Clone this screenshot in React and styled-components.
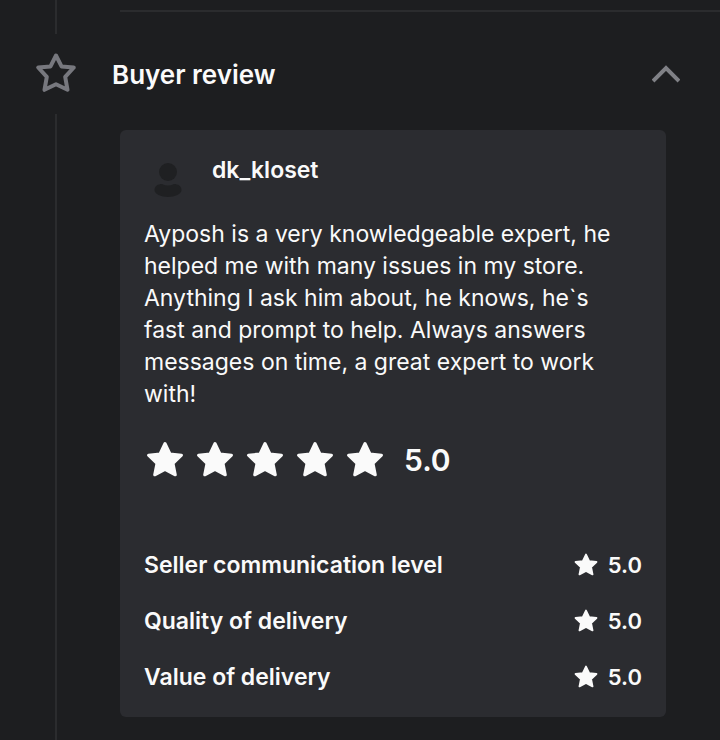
import React, { useState } from 'react';
import styled, { createGlobalStyle } from 'styled-components';

const review = {
  buyer: 'dk_kloset',
  text: 'Ayposh is a very knowledgeable expert, he helped me with many issues in my store. Anything I ask him about, he knows, he`s fast and prompt to help. Always answers messages on time, a great expert to work with!',
  score: '5.0',
};

const ratings = [
  { id: 0, name: 'Seller communication level', score: '5.0' },
  { id: 1, name: 'Quality of delivery', score: '5.0' },
  { id: 2, name: 'Value of delivery', score: '5.0' },
];

const starPath =
  'M19 2.500 24 13 35.500 14.200 27 22.300 29.300 33.800 19 28.400 8.700 33.800 11 22.300 2.500 14.200 14 13Z';

function Star({ size }) {
  return (
    <StarIcon $size={size} viewBox='0 0 38 38' aria-hidden='true'>
      <path d={starPath} />
    </StarIcon>
  );
}

function App() {
  const [open, setOpen] = useState(true);

  return (
    <Page>
      <GlobalStyle />
      <Step>
        <Rail>
          <Line />
        </Rail>
        <Divider />
      </Step>
      <Step $grow>
        <Rail>
          <RailIcon viewBox='0 0 42 42' aria-hidden='true'>
            <path d='M21 3.500 26.500 14.400 38.800 15.500 30.200 24.800 32.500 37.800 21 32.300 9.500 37.800 11.800 24.800 3.200 15.500 15.500 14.400Z' />
          </RailIcon>
          <Line />
        </Rail>
        <div>
          <Header aria-expanded={open} onClick={() => setOpen(!open)}>
            Buyer review
            <Chevron $open={open} viewBox='0 0 28 18' aria-hidden='true'>
              <path d='M1 16 14 3 27 16' />
            </Chevron>
          </Header>
          {open && (
            <Card>
              <Buyer>
                <Avatar viewBox='0 0 48 48' aria-hidden='true'>
                  <circle cx='24' cy='18' r='9' />
                  <path d='M10.500 36C10.500 32 14 30 18 30C22 32 26 32 30 30C34 30 37.500 32 37.500 36C37.500 40 31 43 24 43C17 43 10.500 40 10.500 36Z' />
                </Avatar>
                <BuyerName>{review.buyer}</BuyerName>
              </Buyer>
              <ReviewText>{review.text}</ReviewText>
              <Overall>
                <Stars>
                  {[1, 2, 3, 4, 5].map((n) => (
                    <Star key={n} size={38} />
                  ))}
                </Stars>
                <OverallScore>{review.score}</OverallScore>
              </Overall>
              <RatingList>
                {ratings.map((rating) => (
                  <RatingRow key={rating.id}>
                    <span>{rating.name}</span>
                    <RatingScore>
                      <Star size={24} />
                      {rating.score}
                    </RatingScore>
                  </RatingRow>
                ))}
              </RatingList>
            </Card>
          )}
        </div>
      </Step>
    </Page>
  );
}

const GlobalStyle = createGlobalStyle`
  * {
    box-sizing: border-box;
  }
  body {
    margin: 0;
    background: #1d1e20;
    color: #fafafa;
    font-family: Inter, 'Liberation Sans', sans-serif;
  }
`;
const Page = styled.main`
  display: flex;
  flex-direction: column;
  min-height: 100vh;
`;
const Step = styled.section`
  display: grid;
  grid-template-columns: 112px 1fr;
  flex-grow: ${(props) => (props.$grow ? 1 : 0)};
`;
const Rail = styled.div`
  display: flex;
  flex-direction: column;
  align-items: center;
`;
const Line = styled.div`
  flex: 1;
  width: 2px;
  min-height: 34px;
  background: #2b2c2e;
`;
const RailIcon = styled.svg`
  width: 42px;
  height: 42px;
  margin: 18px 0 20px;
  fill: none;
  stroke: #77787e;
  stroke-width: 4;
  stroke-linejoin: round;
`;
const Divider = styled.hr`
  width: auto;
  height: 2px;
  margin: 10px 0 0 8px;
  border: 0;
  background: #2b2c2e;
`;
const Header = styled.button`
  display: flex;
  align-items: center;
  justify-content: space-between;
  width: 100%;
  height: 80px;
  padding: 0 40px 0 0;
  border: 0;
  background: none;
  color: inherit;
  font-family: inherit;
  font-size: 26px;
  font-weight: 600;
  cursor: pointer;
`;
const Chevron = styled.svg`
  width: 28px;
  height: 18px;
  fill: none;
  stroke: #808186;
  stroke-width: 4;
  transform: ${(props) => (props.$open ? 'none' : 'rotate(180deg)')};
`;
const Card = styled.article`
  margin: 16px 54px 23px 8px;
  padding: 24px;
  border-radius: 6px;
  background: #2b2c30;
`;
const Buyer = styled.div`
  display: flex;
  gap: 20px;
`;
const Avatar = styled.svg`
  width: 48px;
  height: 48px;
  fill: #1f2022;
`;
const BuyerName = styled.h3`
  margin: 0;
  font-size: 23px;
  font-weight: 600;
  line-height: 32px;
`;
const ReviewText = styled.p`
  margin: 16px 0 30px;
  padding-right: 16px;
  font-size: 23px;
  line-height: 32px;
`;
const Overall = styled.div`
  display: flex;
  align-items: center;
  gap: 20px;
  height: 40px;
`;
const Stars = styled.div`
  display: flex;
  gap: 12px;
  padding-left: 2px;
`;
const StarIcon = styled.svg`
  width: ${(props) => props.$size}px;
  height: ${(props) => props.$size}px;
  fill: #fafafa;
  stroke: #fafafa;
  stroke-width: 3;
  stroke-linejoin: round;
`;
const OverallScore = styled.strong`
  font-size: 30px;
  font-weight: 600;
`;
const RatingList = styled.ul`
  display: flex;
  flex-direction: column;
  gap: 24px;
  margin: 69px 0 0;
  padding: 0;
  list-style: none;
`;
const RatingRow = styled.li`
  display: flex;
  align-items: center;
  justify-content: space-between;
  font-size: 23px;
  font-weight: 600;
  line-height: 32px;
`;
const RatingScore = styled.span`
  display: flex;
  align-items: center;
  gap: 10px;
  font-size: 22px;
`;

export default App;
